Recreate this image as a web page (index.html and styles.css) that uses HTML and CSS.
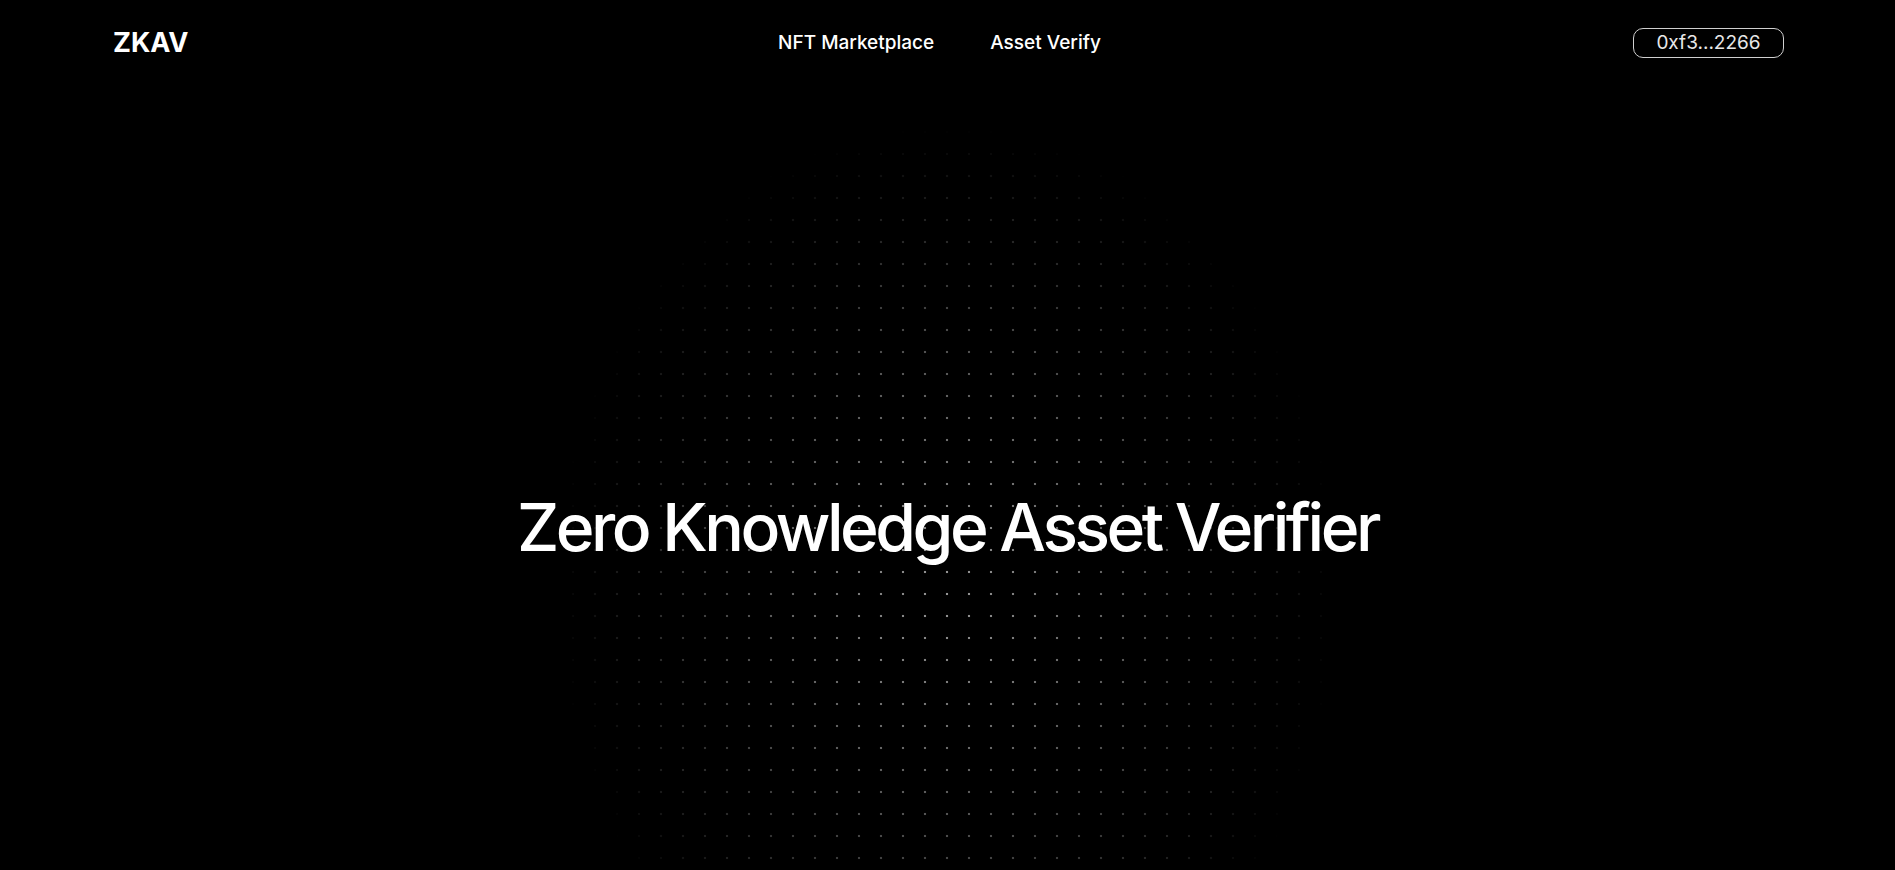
FILE: index.html
```html
<!DOCTYPE html>
<html lang="en">
<head>
<meta charset="utf-8">
<title>ZKAV</title>
<link rel="stylesheet" href="styles.css">
</head>
<body>
<div class="page">
  <div class="dots" aria-hidden="true"></div>
  <header class="header">
    <a class="logo" href="#">ZKAV</a>
    <nav class="nav">
      <a href="#">NFT Marketplace</a>
      <a href="#">Asset Verify</a>
    </nav>
    <div class="wallet-wrap">
      <button class="wallet">0xf3...2266</button>
    </div>
  </header>
  <main class="hero">
    <h1 class="title">Zero Knowledge Asset Verifier</h1>
  </main>
</div>
</body>
</html>
```

FILE: styles.css
```css
* { box-sizing: border-box; }
html, body {
  margin: 0;
  padding: 0;
  background: #000;
  color: #fff;
  font-family: Inter, "Noto Sans", sans-serif;
  overflow: hidden;
}
.page {
  position: relative;
  width: 100%;
  height: 870px;
  overflow: hidden;
}
.dots {
  position: absolute;
  inset: 0;
  z-index: 0;
  pointer-events: none;
  background-image: radial-gradient(circle at 11px 11px, rgba(255,255,255,0.6) 1.1px, transparent 1.6px);
  background-size: 22px 22px;
  background-position: -10px -11px;
  -webkit-mask-image: radial-gradient(392px 462px at 947px 588px, #000 0%, rgba(0,0,0,0.6) 45%, transparent 100%);
  mask-image: radial-gradient(392px 462px at 947px 588px, #000 0%, rgba(0,0,0,0.6) 45%, transparent 100%);
}
.header {
  position: relative;
  z-index: 1;
  display: grid;
  grid-template-columns: 1fr auto 1fr;
  align-items: center;
  padding: 26px 111px 28px 113px;
  height: 84px;
}
.logo {
  color: #fff;
  text-decoration: none;
  font-weight: 700;
  font-size: 27px;
  letter-spacing: 0;
  justify-self: start;
}
.nav {
  display: flex;
  gap: 56px;
  margin-right: 18px;
}
.nav a {
  color: #fff;
  text-decoration: none;
  font-size: 19px;
  font-weight: 500;
}
.wallet-wrap {
  justify-self: end;
}
.wallet {
  background: transparent;
  color: #e8e8e8;
  font-family: Inter, "Noto Sans", sans-serif;
  font-size: 19px;
  font-weight: 400;
  border: 1px solid #d0d0d0;
  border-radius: 10px;
  height: 30px;
  width: 151px;
  padding: 0;
  display: flex;
  align-items: center;
  justify-content: center;
  cursor: pointer;
}
.hero {
  position: relative;
  z-index: 1;
  display: flex;
  justify-content: center;
  padding-top: 403px;
}
.title {
  margin: 0;
  font-size: 66px;
  line-height: 80px;
  font-weight: 500;
  letter-spacing: -0.053em;
  color: #fff;
}
```
